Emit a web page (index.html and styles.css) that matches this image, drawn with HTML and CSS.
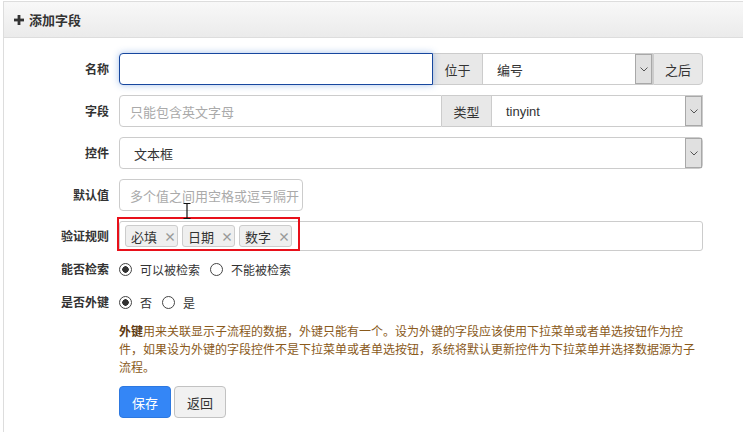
FILE: index.html
```html
<!DOCTYPE html>
<html>

<head>
    <meta charset="utf-8">
    <title>添加字段</title>
    <link rel="stylesheet" href="styles.css">
</head>

<body>
    <div class="panel">
        <div class="panel-heading">
            <svg class="plus-icon" width="10" height="10" viewBox="0 0 10 10">
                <rect x="3.6" y="0" width="2.8" height="10" fill="#333"/>
                <rect x="0" y="3.6" width="10" height="2.8" fill="#333"/>
            </svg>
            添加字段
        </div>
        <div class="panel-body">
            <div class="form-row">
                <label class="form-label">名称</label>
                <div class="form-ctrl">
                    <div class="input-group">
                        <div class="input focused name-input"></div>
                        <span class="addon">位于</span>
                        <div class="select">
                            <span class="select-value">编号</span>
                            <span class="select-arrow"><svg width="8" height="5" viewBox="0 0 8 5"><path d="M0.5 0.5 L4 4 L7.5 0.5" stroke="#555" fill="none"/></svg></span>
                        </div>
                        <span class="addon addon-last">之后</span>
                    </div>
                </div>
            </div>

            <div class="form-row">
                <label class="form-label">字段</label>
                <div class="form-ctrl">
                    <div class="input-group">
                        <div class="input field-input"><span class="placeholder">只能包含英文字母</span></div>
                        <span class="addon">类型</span>
                        <div class="select type-select">
                            <span class="select-value">tinyint</span>
                            <span class="select-arrow"><svg width="8" height="5" viewBox="0 0 8 5"><path d="M0.5 0.5 L4 4 L7.5 0.5" stroke="#555" fill="none"/></svg></span>
                        </div>
                    </div>
                </div>
            </div>

            <div class="form-row">
                <label class="form-label">控件</label>
                <div class="form-ctrl">
                    <div class="select select-full">
                        <span class="select-value">文本框</span>
                        <span class="select-arrow"><svg width="8" height="5" viewBox="0 0 8 5"><path d="M0.5 0.5 L4 4 L7.5 0.5" stroke="#555" fill="none"/></svg></span>
                    </div>
                </div>
            </div>

            <div class="form-row">
                <label class="form-label">默认值</label>
                <div class="form-ctrl">
                    <div class="input input-short"><span class="placeholder">多个值之间用空格或逗号隔开</span></div>
                </div>
            </div>

            <div class="form-row tags-row">
                <label class="form-label">验证规则</label>
                <div class="form-ctrl tags-ctrl">
                    <div class="tags-input">
                        <span class="tag">必填<span class="tag-x">×</span></span>
                        <span class="tag">日期<span class="tag-x">×</span></span>
                        <span class="tag">数字<span class="tag-x">×</span></span>
                    </div>
                    <div class="highlight"></div>
                    <svg class="text-cursor" width="8" height="16" viewBox="0 0 8 16">
                        <path d="M0.5 0.5 H7.5 M4 0.5 V15.5 M0.5 15.5 H7.5" stroke="#111" stroke-width="1.2" fill="none"/>
                    </svg>
                </div>
            </div>

            <div class="form-row radio-row search-row">
                <label class="form-label">能否检索</label>
                <div class="form-ctrl radios">
                    <span class="radio checked"></span><span class="radio-text">可以被检索</span>
                    <span class="radio"></span><span class="radio-text">不能被检索</span>
                </div>
            </div>

            <div class="form-row radio-row">
                <label class="form-label">是否外键</label>
                <div class="form-ctrl radios">
                    <span class="radio checked"></span><span class="radio-text">否</span>
                    <span class="radio"></span><span class="radio-text">是</span>
                </div>
            </div>

            <div class="form-row">
                <div class="form-label"></div>
                <div class="form-ctrl">
                    <p class="help-text"><b>外键</b>用来关联显示子流程的数据，外键只能有一个。设为外键的字段应该使用下拉菜单或者单选按钮作为控件，如果设为外键的字段控件不是下拉菜单或者单选按钮，系统将默认更新控件为下拉菜单并选择数据源为子流程。</p>
                    <div class="buttons">
                        <button class="btn btn-primary">保存</button>
                        <button class="btn btn-default">返回</button>
                    </div>
                </div>
            </div>
        </div>
    </div>
</body>

</html>
```

FILE: styles.css
```css
/* page */
body {
    margin: 0;
    overflow: hidden;
    background: #fff;
    font-family: "Noto Sans CJK SC", "Liberation Sans", sans-serif;
    font-size: 13px;
    color: #333;
}

/* panel */
.panel {
    margin: 1px 0 0 3px;
    width: 740px;
    box-sizing: border-box;
    border: 1px solid #ddd;
    border-right: none;
    height: 440px;
}

.panel-heading {
    height: 35px;
    display: flex;
    align-items: center;
    padding-left: 10px;
    border-bottom: 1px solid #ddd;
    background: linear-gradient(#f8f8f8, #ebebeb);
    font-weight: bold;
    font-size: 13px;
}

.plus-icon {
    margin-right: 5px;
}

.panel-body {
    padding-top: 15px;
}

/* rows */
.form-row {
    display: flex;
    gap: 10px;
    margin-bottom: 10px;
}

.form-label {
    width: 105px;
    flex: none;
    text-align: right;
    font-weight: bold;
    font-size: 12px;
    line-height: 32px;
}

.form-ctrl {
    width: 584px;
    flex: none;
}

/* inputs */
.input-group {
    display: flex;
    height: 32px;
}

.input {
    box-sizing: border-box;
    height: 32px;
    border: 1px solid #ccc;
    border-radius: 4px;
    padding-left: 10px;
    display: flex;
    align-items: center;
    background: #fff;
}

.input-group .input {
    border-radius: 4px 0 0 4px;
}

.focused {
    border-color: #17479e;
    box-shadow: 0 0 7px rgba(60, 120, 210, 0.45);
    position: relative;
}

.name-input {
    width: 314px;
}

.field-input {
    width: 323px;
}

.input-short {
    width: 184px;
    overflow: hidden;
    white-space: nowrap;
}

.placeholder {
    color: #aaa;
}

.addon {
    box-sizing: border-box;
    width: 50px;
    display: flex;
    align-items: center;
    justify-content: center;
    background: #e8e8e8;
    border: 1px solid #ccc;
    border-left: none;
}

.addon-last {
    border-radius: 0 4px 4px 0;
    border-left: 1px solid #ccc;
}

/* select */
.select {
    box-sizing: border-box;
    height: 32px;
    flex: 1;
    display: flex;
    border: 1px solid #ccc;
    border-left: none;
    background: #fff;
}

.select-value {
    flex: 1;
    padding-left: 14px;
    display: flex;
    align-items: center;
}

.type-select .select-value {
    font-family: "Liberation Sans", sans-serif;
}

.select-arrow {
    width: 17px;
    box-sizing: border-box;
    background: #e0e0e0;
    border: 1px solid #a8a8a8;
    display: flex;
    align-items: center;
    justify-content: center;
}

.select-full {
    border-left: 1px solid #ccc;
    border-radius: 4px;
}

/* tags */
.tags-row .form-label {
    line-height: 30px;
}

.tags-ctrl {
    position: relative;
}

.tags-input {
    box-sizing: border-box;
    height: 30px;
    border: 1px solid #ccc;
    border-radius: 3px;
    display: flex;
    align-items: center;
    gap: 4px;
    padding-left: 5px;
}

.tag {
    box-sizing: border-box;
    flex: none;
    width: 53px;
    height: 22px;
    display: flex;
    align-items: center;
    padding-left: 5px;
    white-space: nowrap;
    background: #efefef;
    border: 1px solid #ccc;
    border-radius: 3px;
}

.tag-x {
    margin-left: 7px;
    color: #999;
    font-weight: bold;
    font-size: 12px;
}

.highlight {
    position: absolute;
    left: -2px;
    top: -4px;
    width: 183px;
    height: 34px;
    box-sizing: border-box;
    border: 2px solid #e8101a;
}

.text-cursor {
    position: absolute;
    left: 64px;
    top: -18px;
}

/* radios */
.radio-row {
    margin-bottom: 11px;
}

.radio-row .form-label {
    line-height: 22px;
}

.search-row {
    margin-top: -3px;
}

.radios {
    display: flex;
    align-items: center;
    height: 22px;
    font-size: 12px;
}

.radio {
    box-sizing: border-box;
    width: 13px;
    height: 13px;
    border: 1px solid #444;
    border-radius: 50%;
    margin-right: 8px;
    background: #fff;
}

.radio.checked {
    background: radial-gradient(circle, #333 0, #333 3px, #fff 3.5px);
}

.radio-text {
    margin-right: 10px;
}

/* help + buttons */
.help-text {
    margin: -2px 0 0 0;
    width: 585px;
    font-size: 12px;
    line-height: 18px;
    color: #8a5a1b;
}

.help-text b {
    color: #5d3a10;
}

.buttons {
    display: flex;
    gap: 3px;
    margin-top: 10px;
}

.btn {
    box-sizing: border-box;
    width: 52px;
    height: 32px;
    border-radius: 4px;
    font-family: "Noto Sans CJK SC", sans-serif;
    font-size: 13px;
    cursor: pointer;
}

.btn-primary {
    background: #3486f6;
    border: 1px solid #2d78e0;
    color: #fff;
}

.btn-default {
    background: #f1f1f1;
    border: 1px solid #c2c2c2;
    color: #333;
}
```
